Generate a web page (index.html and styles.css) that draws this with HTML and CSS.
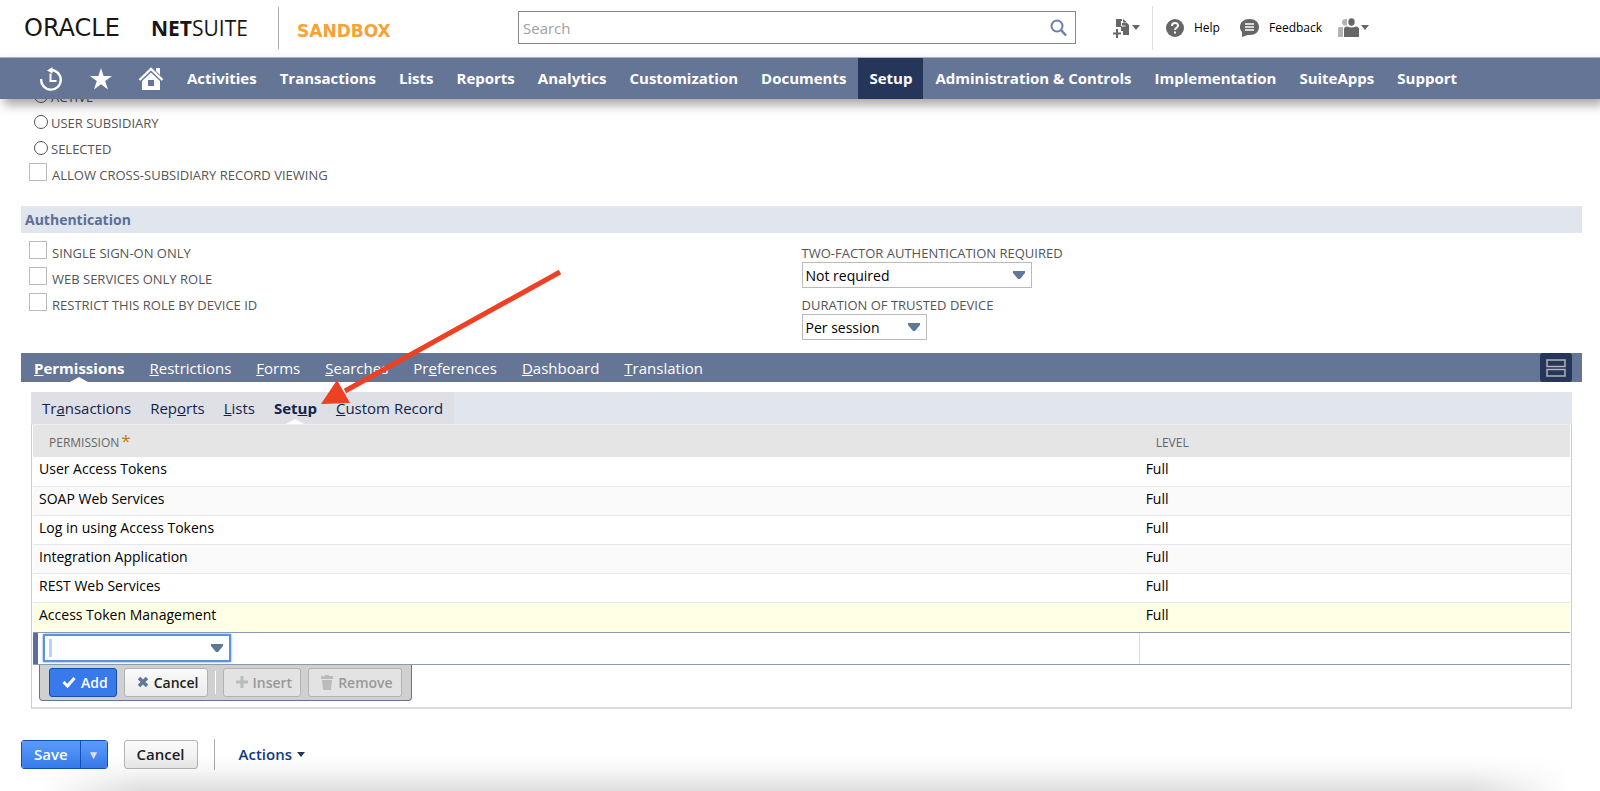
FILE: index.html
```html
<!DOCTYPE html>
<html lang="en">
<head>
  <meta charset="UTF-8">
  <meta name="viewport" content="width=device-width, initial-scale=1.0">
  <title>Role - NetSuite</title>
  <link rel="stylesheet" href="styles.css">
</head>
<body>
  <!-- Header -->
  <header class="header">
    <a class="logo" href="#"><span class="logo-oracle">ORACLE</span><span class="logo-suite"><b>NET</b>SUITE</span></a>
    <span class="env">SANDBOX</span>
    <form class="search">
      <input type="text" aria-label="Search" placeholder="Search">
      <button type="button" aria-label="Run search">
        <svg width="18" height="18" viewBox="0 0 18 18" fill="none" stroke="#6b80a8" stroke-width="2"><circle cx="7" cy="7" r="5.5"/><path d="M11 11l5 5.500" stroke-width="2.500"/></svg>
      </button>
    </form>
    <div class="tools">
      <button type="button" class="tool tool-new" aria-label="Create new">
        <svg width="17" height="20" viewBox="0 0 17 20"><path fill="#666" d="M3 1h6v4h5l2 2v10h-6v-4H8V9H3z"/><path fill="#666" d="M10 1l4 3.500h-4z"/><path d="M8.500 3v5h4" fill="none" stroke="#fff"/><path d="M4 11v9M0 15.500h8" stroke="#666" stroke-width="2"/></svg>
        <i class="caret"></i>
      </button>
      <a class="tool tool-help" href="#">
        <svg width="18" height="18" viewBox="0 0 18 18"><circle cx="9" cy="9" r="9" fill="#666"/><path d="M6 7c0-4 6-4 6-.5C12 9 9 8.500 9 11" fill="none" stroke="#fff" stroke-width="2"/><path d="M8 12.500h2v2H8z" fill="#fff"/></svg>
        Help
      </a>
      <a class="tool tool-feedback" href="#">
        <svg width="19" height="18" viewBox="0 0 19 18"><path fill="#666" d="M9.500 0C15 0 19 3 19 8s-4 8-9 8c-2 0-3 0-4 .5L2 18v-5C0 11 0 9.500 0 8 0 3 4 0 9.500 0z"/><path d="M5 5h9M5 8h9M5 11h9" stroke="#fff" stroke-width="1.500"/></svg>
        Feedback
      </a>
      <button type="button" class="tool" aria-label="Change role">
        <svg width="21" height="20" viewBox="0 0 21 20"><g fill="#b3b3b3"><path d="M9 1c-6-1-6 5-3 6.500h3z"/><path d="M0 19v-8q0-2 2-2h3v10z"/></g><g fill="#666"><ellipse cx="13.500" cy="4" rx="3.200" ry="3.800"/><path d="M6 19v-8q0-2 3-2.500 4.500 2 9 0 3 .5 3 2.500v8z"/></g></svg>
        <i class="caret"></i>
      </button>
    </div>
  </header>

  <!-- Main menu -->
  <nav class="menu">
    <a class="menu-icon" href="#" aria-label="Recent records">
      <svg width="24" height="24" viewBox="0 0 24 24" fill="none" stroke="#fff"><path d="M2.200 12a9.800 9.800 0 1 0 10-9" stroke-width="2.400"/><path d="M11.500 6.500V14h6" stroke-width="2"/><path d="M13.500 0v6.500L8 3.500z" fill="#fff" stroke="none"/></svg>
    </a>
    <a class="menu-icon" href="#" aria-label="Shortcuts">
      <svg width="24" height="24" viewBox="0 0 24 24"><path fill="#fff" d="M12 1l2.600 8H23l-6.800 4.900L19 22.500l-7-5.200-7 5.200 2.800-8.600L1 9h8.400z"/></svg>
    </a>
    <a class="menu-icon" href="#" aria-label="Home">
      <svg width="26" height="24" viewBox="0 0 26 24"><path d="M1.500 13L13 2l11.500 11" fill="none" stroke="#fff" stroke-width="2.400"/><path fill="#fff" d="M18 1h4v7l-4-4z"/><path fill="#fff" fill-rule="evenodd" d="M4 14l9-8.500L22 14v9H4zM10 13v6h6v-6z"/></svg>
    </a>
    <a href="#">Activities</a>
    <a href="#">Transactions</a>
    <a href="#">Lists</a>
    <a href="#">Reports</a>
    <a href="#">Analytics</a>
    <a href="#">Customization</a>
    <a href="#">Documents</a>
    <a class="active" href="#">Setup</a>
    <a href="#">Administration &amp; Controls</a>
    <a href="#">Implementation</a>
    <a href="#">SuiteApps</a>
    <a href="#">Support</a>
  </nav>

  <main class="page">
    <!-- Subsidiary restrictions -->
    <div class="options">
      <label class="option"><input type="radio" name="subsidiary">Active</label>
      <label class="option"><input type="radio" name="subsidiary">User Subsidiary</label>
      <label class="option"><input type="radio" name="subsidiary">Selected</label>
      <label class="option"><input type="checkbox">Allow Cross-Subsidiary Record Viewing</label>
    </div>

    <!-- Authentication -->
    <h2 class="section-title">Authentication</h2>
    <div class="columns">
      <div class="options">
        <label class="option"><input type="checkbox">Single Sign-On Only</label>
        <label class="option"><input type="checkbox">Web Services Only Role</label>
        <label class="option"><input type="checkbox">Restrict This Role by Device ID</label>
      </div>
      <div class="fields">
        <label for="twoFactor">Two-Factor Authentication Required</label>
        <select id="twoFactor" class="select"><option>Not required</option></select>
        <label for="duration">Duration of Trusted Device</label>
        <select id="duration" class="select select-short"><option>Per session</option></select>
      </div>
    </div>

    <!-- Tabs -->
    <nav class="tabs">
      <a class="active" href="#"><u>P</u>ermissions</a>
      <a href="#"><u>R</u>estrictions</a>
      <a href="#"><u>F</u>orms</a>
      <a href="#"><u>S</u>earches</a>
      <a href="#">Pr<u>e</u>ferences</a>
      <a href="#"><u>D</u>ashboard</a>
      <a href="#"><u>T</u>ranslation</a>
      <button type="button" class="layout" aria-label="Unlayered view">
        <svg width="20" height="18" viewBox="0 0 20 18" fill="none" stroke="#b3b3b3" stroke-width="1.500"><path d="M1 1h18v6.500H1zM1 10.500h18V17H1z"/></svg>
      </button>
    </nav>

    <section class="panel">
      <nav class="subtabs">
        <div class="subtabs-list">
          <a href="#">Tr<u>a</u>nsactions</a>
          <a href="#">Rep<u>o</u>rts</a>
          <a href="#"><u>L</u>ists</a>
          <a class="active" href="#">Set<u>u</u>p</a>
          <a href="#"><u>C</u>ustom Record</a>
        </div>
      </nav>
      <div class="sheet">
        <table class="grid">
          <thead>
            <tr><th class="col-permission">Permission<span class="required">*</span></th><th>Level</th></tr>
          </thead>
          <tbody>
            <tr><td>User Access Tokens</td><td>Full</td></tr>
            <tr><td>SOAP Web Services</td><td>Full</td></tr>
            <tr><td>Log in using Access Tokens</td><td>Full</td></tr>
            <tr><td>Integration Application</td><td>Full</td></tr>
            <tr><td>REST Web Services</td><td>Full</td></tr>
            <tr class="highlight"><td>Access Token Management</td><td>Full</td></tr>
            <tr class="editing">
              <td><select class="select select-focus" aria-label="Permission"><option></option></select></td>
              <td></td>
            </tr>
          </tbody>
        </table>
        <div class="row-actions">
          <button type="button" class="btn btn-add">
            <svg width="14" height="12" viewBox="0 0 14 12"><path d="M1.500 6l4 4 7-8" fill="none" stroke="#fff" stroke-width="3"/></svg>Add
          </button>
          <button type="button" class="btn">
            <svg width="12" height="12" viewBox="0 0 12 12"><path d="M2 2l8 8M10 2l-8 8" stroke="#607799" stroke-width="3.500"/></svg>Cancel
          </button>
          <span class="split"></span>
          <button type="button" class="btn" disabled>
            <svg width="12" height="12" viewBox="0 0 12 12"><path d="M6 0v12M0 6h12" stroke="#bbb" stroke-width="3"/></svg>Insert
          </button>
          <button type="button" class="btn" disabled>
            <svg width="12" height="15" viewBox="0 0 12 15"><path fill="#bbb" d="M0 1h4V0h4v1h4v3H0zM1 5h10l-1 10H2z"/></svg>Remove
          </button>
        </div>
      </div>
    </section>

    <!-- Page actions -->
    <div class="footer">
      <div class="save">
        <button type="button">Save</button><button type="button" class="save-more" aria-label="More save options">▼</button>
      </div>
      <button type="button" class="btn btn-cancel">Cancel</button>
      <a class="actions" href="#">Actions<i class="caret"></i></a>
    </div>
  </main>

  <!-- Pointer to the Setup subtab -->
  <svg class="arrow" width="242" height="138" viewBox="0 0 242 138"><path d="M239 2L24 121" stroke="#ee4023" stroke-width="5"/><path fill="#ee4023" d="M0 134l16-24 13 23z"/></svg>
</body>
</html>
```
FILE: styles.css
```css
* {
  box-sizing: border-box;
}
body {
  margin: 0;
  min-height: 100vh;
  position: relative;
  font-family: "Open Sans", sans-serif;
  font-size: 13px;
  color: #000;
  background: #fff;
}
/* shade at the bottom edge of the window */
body::after {
  content: "";
  position: absolute;
  left: 40px;
  right: 30px;
  bottom: 0;
  height: 36px;
  background: linear-gradient(transparent, rgba(0, 0, 0, 0.03) 40%, rgba(0, 0, 0, 0.13));
  mask-image: linear-gradient(90deg, transparent, #000 100px, #000 calc(100% - 100px), transparent);
  pointer-events: none;
}
a {
  color: inherit;
  text-decoration: none;
}
button, input, select {
  font-family: inherit;
  font-size: inherit;
}
.caret {
  border: 4px solid transparent;
  border-top: 5px solid #666;
  border-bottom: 0;
}

/* Header */
.header {
  display: flex;
  align-items: center;
  height: 57px;
  padding: 0 0 2px 24px;
}
.logo {
  display: flex;
  align-items: center;
  width: 254px;
  font-size: 21px;
  color: #1a1613;
}
.logo-oracle {
  width: 127px;
  font-family: "DejaVu Sans", sans-serif;
  font-size: 24px;
}
.env {
  width: 240px;
  padding: 14px 0 8px 18px;
  border-left: 1px solid #aaa;
  font: bold 17px "DejaVu Sans", sans-serif;
  color: #f7a136;
}
.search {
  display: flex;
  flex: 0 1 558px;
  height: 33px;
  border: 1px solid #888;
}
.search input {
  flex: 1;
  border: 0;
  padding: 0 4px;
  font-size: 15px;
  outline: none;
}
.search input::placeholder {
  color: #a0a0a0;
}
.search button {
  padding: 4px 7px 0;
  border: 0;
  background: none;
}
.tools {
  display: flex;
  align-items: center;
  margin-left: 37px;
  font-size: 12px;
}
.tool {
  display: flex;
  align-items: center;
  gap: 10px;
  padding: 0;
  border: 0;
  background: none;
}
button.tool {
  gap: 2px;
}
.tool-new {
  height: 44px;
  margin-right: 12px;
}
.tool-help {
  height: 44px;
  padding-left: 13px;
  border-left: 1px solid #ddd;
}
.tool-feedback {
  margin: 0 16px 0 20px;
}

/* Main menu */
.menu {
  position: relative;
  z-index: 1;
  display: flex;
  gap: 1px;
  height: 42px;
  padding-left: 26px;
  border-top: 1px solid #a9b3c6;
  background: #657596;
  color: #fff;
  font-size: 15px;
  font-weight: bold;
  box-shadow: 4px 6px 10px rgba(0, 0, 0, 0.35);
}
.menu a {
  display: flex;
  align-items: center;
  padding: 0 11px 2px;
}
.menu .menu-icon {
  justify-content: center;
  width: 49px;
  padding-bottom: 0;
}
.menu .active {
  background: #26365a;
}

/* Page */
.page {
  margin-top: -15px;
  padding: 0 18px 0 21px;
}
.options {
  display: flex;
  flex-direction: column;
  padding-left: 8px;
}
.option {
  display: flex;
  align-items: center;
  height: 26px;
  color: #555;
  text-transform: uppercase;
}
.option input {
  appearance: none;
  width: 18px;
  height: 18px;
  margin: 0 5px 7px 0;
  border: 1px solid #bbb;
  background: #fff;
}
.option input[type="radio"] {
  width: 14px;
  height: 14px;
  margin: 0 3px 3px 5px;
  border-color: #555;
  border-radius: 50%;
}
.section-title {
  margin: 18px 0 7px;
  padding: 0 4px;
  line-height: 27px;
  font-size: 14px;
  color: #5a6f98;
  background: #e0e5ee;
}
.columns {
  display: grid;
  grid-template-columns: 1fr 1fr;
  padding-bottom: 13px;
}
.fields {
  display: flex;
  flex-direction: column;
  align-items: flex-start;
  color: #555;
}
.fields label {
  height: 22px;
  line-height: 26px;
  text-transform: uppercase;
}
.fields .select {
  margin-bottom: 4px;
}
.fields .select-short {
  width: 125px;
  margin-bottom: 0;
}
.select {
  appearance: none;
  width: 230px;
  height: 26px;
  padding: 0 3px;
  border: 1px solid #bbb;
  border-radius: 0;
  font-size: 14px;
  color: #000;
  background: #fff url("data:image/svg+xml,%3Csvg xmlns='http://www.w3.org/2000/svg' width='12' height='8'%3E%3Cpath fill='%23607799' d='M0 0h12v2L7 8H5L0 2z'/%3E%3C/svg%3E") no-repeat right 6px center;
}

/* Tabs */
.tabs {
  display: flex;
  height: 29px;
  padding: 0 10px 0 13px;
  background: #657596;
  color: #fff;
  font-size: 15px;
}
.tabs a {
  position: relative;
  margin-right: 25px;
  line-height: 30px;
}
.tabs .active, .subtabs .active {
  font-weight: bold;
}
.tabs .active::after, .subtabs .active::after {
  content: "";
  position: absolute;
  left: 50%;
  bottom: 0;
  margin-left: -9px;
  border: 9px solid transparent;
  border-top: 0;
  border-bottom: 5px solid #fff;
}
.layout {
  display: flex;
  align-items: center;
  justify-content: center;
  width: 32px;
  margin-left: auto;
  padding: 0;
  border: 0;
  border-radius: 3px;
  background: #26365a;
}
.panel {
  margin: 10px 10px 0;
}
.subtabs {
  background: #e0e5ee;
  font-size: 15px;
  color: #13234e;
}
.subtabs-list {
  display: inline-flex;
  gap: 19px;
  height: 32px;
  padding: 0 11px;
  background: #dfe0e6;
  vertical-align: top;
}
.subtabs a {
  position: relative;
  line-height: 32px;
}

/* Permission list */
.sheet {
  padding: 0 1px 6px;
  border: 1px solid #ccc;
  border-top-color: #eee;
  border-bottom: 2px solid #ddd;
}
.grid {
  width: 100%;
  border-collapse: collapse;
}
.grid th {
  height: 32px;
  padding: 2px 16px 0;
  text-align: left;
  font-size: 12px;
  font-weight: normal;
  color: #666;
  text-transform: uppercase;
  background: #e5e5e5;
}
.col-permission {
  width: 72%;
}
.required {
  margin-left: 2px;
  font-size: 17px;
  line-height: 16px;
  color: #c77b0a;
}
.grid td {
  height: 29px;
  padding: 0 6px 5px;
  border-bottom: 1px solid #e6e6ec;
  font-size: 14px;
}
.grid tr:nth-child(even) {
  background: #fafafa;
}
.grid tr.highlight {
  background: #ffffe5;
}
.grid .highlight td {
  height: 30px;
  border-bottom-color: #8a99b5;
}
.grid .editing td {
  height: 32px;
  padding: 0 10px;
  border-bottom-color: #8a99b5;
}
.grid .editing td:first-child {
  border-right: 1px solid #ddd;
  box-shadow: inset 5px 0 #5a6f98;
}
.select-focus {
  display: block;
  width: 188px;
  height: 28px;
  border: 2px solid #5b94dd;
  box-shadow: 0 0 2px #5b94dd, inset 3px 0 #fff;
  background-image: url("data:image/svg+xml,%3Csvg xmlns='http://www.w3.org/2000/svg' width='12' height='8'%3E%3Cpath fill='%23607799' d='M0 0h12v2L7 8H5L0 2z'/%3E%3C/svg%3E"), linear-gradient(#b3d4fb, #b3d4fb);
  background-position: right 6px center, left 4px center;
  background-size: 12px 8px, 3px 18px;
}
.row-actions {
  display: inline-flex;
  gap: 7px;
  margin-left: 6px;
  padding: 3px 9px;
  border: 1px solid #657596;
  border-top: 0;
  border-radius: 0 0 4px 4px;
  background: #d0d0d0;
  vertical-align: top;
}
.btn {
  display: flex;
  align-items: center;
  gap: 5px;
  height: 29px;
  padding: 0 8px;
  border: 1px solid #b3b3b3;
  border-radius: 3px;
  font-size: 14px;
  font-weight: 600;
  color: #222;
  background: linear-gradient(#fafafa, #ebebeb);
}
.btn svg {
  margin-left: 4px;
}
.btn:disabled {
  color: #999;
  background: #e3e3e3;
}
.btn-add {
  border-color: #1350b5;
  color: #fff;
  background: #387aea;
}
.split {
  width: 1px;
  margin: 3px 0;
  background: #fff;
}

/* Page actions */
.footer {
  display: flex;
  align-items: center;
  padding: 30px 0 16px;
}
.save {
  display: flex;
  border: 1px solid #1350b5;
  border-radius: 3px;
  overflow: hidden;
}
.save button {
  height: 27px;
  padding: 0 12px;
  border: 0;
  font-size: 15px;
  font-weight: 600;
  color: #fff;
  background: linear-gradient(#5a9bfb, #387aea);
}
.save .save-more {
  padding: 0 7px;
  border-left: 1px solid #1350b5;
  font-size: 12px;
  color: #ddd;
}
.btn-cancel {
  margin: 0 16px;
  padding: 0 12px;
  font-size: 15px;
}
.actions {
  display: flex;
  align-items: center;
  gap: 5px;
  height: 31px;
  padding-left: 24px;
  border-left: 1px solid #aaa;
  font-size: 15px;
  font-weight: 600;
  color: #0d3a85;
}
.actions .caret {
  border-top-color: #26365a;
}
.arrow {
  position: absolute;
  left: 321px;
  top: 270px;
  z-index: 2;
}
```
